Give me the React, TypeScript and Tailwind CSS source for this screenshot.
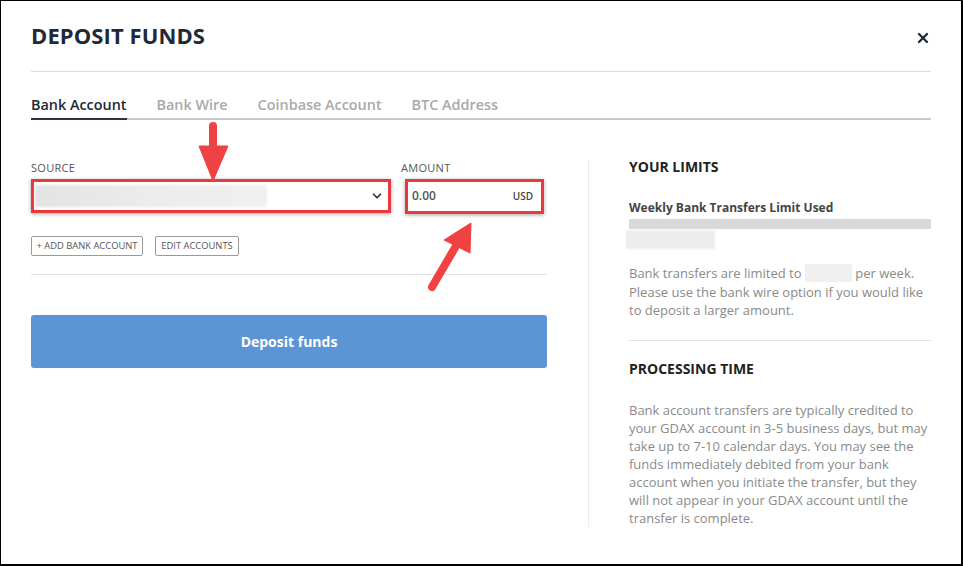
import { X, ChevronDown } from "lucide-react";

function App() {
  const tabs = ["Bank Account", "Bank Wire", "Coinbase Account", "BTC Address"];

  return (
    <div
      className="relative w-[963px] h-[566px] bg-white border-l border-t border-r-2 border-b-2 border-black overflow-hidden"
      style={{ fontFamily: '"Open Sans", "Liberation Sans", sans-serif' }}
    >
      <div className="pl-[30px] pr-[30px]">
        {/* header */}
        <div className="h-[71px] flex items-center justify-between border-b border-[#dcdcdc]">
          <h1 className="text-[22px] leading-[28px] font-bold text-[#1e2a36] tracking-[0.1px] -mt-[2px]">
            DEPOSIT FUNDS
          </h1>
          <X size={16} strokeWidth={3.5} className="text-[#1e2a36] mt-[4px]" />
        </div>

        {/* tabs */}
        <div className="flex gap-[30px] pt-[23px] border-b-2 border-[#c9c9c9]">
          {tabs.map((t, i) => (
            <div
              key={t}
              className={
                i === 0
                  ? "text-[14.4px] leading-[20px] font-semibold text-[#1e2a36] pb-[3px] border-b-2 border-[#2b3440] -mb-[2px]"
                  : "text-[14.4px] leading-[20px] font-semibold text-[#a9a9a9] pb-[3px]"
              }
            >
              {t}
            </div>
          ))}
        </div>

        {/* body */}
        <div className="flex pt-[40px]">
          <div className="w-[516px]">
            <div className="flex gap-[10px]">
              <div className="w-[360px]">
                <div className="text-[11px] leading-[16px] text-[#555] tracking-[0.3px]">SOURCE</div>
                <div className="mt-[3px] h-[34px] border-[3px] border-[#e8393f] shadow-[0_1px_4px_rgba(0,0,0,0.35)] flex items-center justify-between pl-[1px] pr-[4px]">
                  <div className="w-[232px] h-[22px] bg-gradient-to-r from-[#e3e3e3] via-[#ececec] to-[#f0f0f0] blur-[1px]" />
                  <ChevronDown size={14} strokeWidth={3} className="text-[#333]" />
                </div>
              </div>
              <div className="w-[146px]">
                <div className="text-[11px] leading-[16px] text-[#555] tracking-[0.3px]">AMOUNT</div>
                <div className="mt-[3px] ml-[4px] w-[139px] h-[35px] border-[3px] border-[#e8393f] shadow-[0_1px_4px_rgba(0,0,0,0.35)] flex items-center justify-between pl-[4px] pr-[8px]">
                  <span className="text-[12px] font-semibold text-[#555] -mt-[2px]">0.00</span>
                  <span className="text-[10px] font-semibold text-[#444]">USD</span>
                </div>
              </div>
            </div>

            <div className="flex gap-[12px] mt-[22px]">
              <button className="h-[20px] w-[112px] border border-[#9a9a9a] rounded-[2px] text-[9.4px] text-[#555] flex items-center justify-center">
                + ADD BANK ACCOUNT
              </button>
              <button className="h-[20px] w-[84px] border border-[#9a9a9a] rounded-[2px] text-[9.4px] text-[#555] flex items-center justify-center">
                EDIT ACCOUNTS
              </button>
            </div>

            <div className="mt-[18px] h-px bg-[#e2e2e2]" />

            <button className="mt-[40px] w-full h-[53px] bg-[#5b95d6] rounded-[3px] text-white text-[14px] font-bold">
              Deposit funds
            </button>
          </div>

          <div className="ml-[41px] pl-[40px] border-l border-[#ececec] w-[343px] -mt-[1px]">
            <div className="text-[14px] leading-[16px] font-bold text-[#222]">YOUR LIMITS</div>
            <div className="mt-[25px] text-[12px] leading-[16px] font-bold text-[#444]">
              Weekly Bank Transfers Limit Used
            </div>
            <div className="mt-[3px] h-[10px] bg-[#d9d9d9]" />
            <div className="mt-[1px] -ml-[3px] w-[89px] h-[19px] bg-[#ededed] blur-[1px]" />
            <p className="mt-[15px] text-[13px] leading-[18.5px] text-[#8a8a8a]">
              Bank transfers are limited to{" "}
              <span className="inline-block align-middle w-[47px] h-[18px] bg-[#f0f0f0] -mt-[3px]" /> per week.
              Please use the bank wire option if you would like to deposit a larger amount.
            </p>
            <div className="mt-[20px] h-px bg-[#e4e4e4]" />
            <div className="mt-[20px] text-[14px] leading-[16px] font-bold text-[#222]">PROCESSING TIME</div>
            <p className="mt-[24px] text-[13px] leading-[18px] text-[#8a8a8a]">
              Bank account transfers are typically credited to your GDAX account in 3-5 business days, but may
              take up to 7-10 calendar days. You may see the funds immediately debited from your bank account
              when you initiate the transfer, but they will not appear in your GDAX account until the transfer is
              complete.
            </p>
          </div>
        </div>
      </div>

      {/* annotation arrows */}
      <svg className="absolute left-0 top-0 pointer-events-none" width="963" height="566">
        <g fill="#f04243" stroke="#f04243">
          <line x1="212" y1="125" x2="212" y2="150" strokeWidth="8" strokeLinecap="round" />
          <polygon points="198,145 227,145 212,180" strokeWidth="1" strokeLinejoin="round" />
          <line x1="431" y1="286" x2="455" y2="245" strokeWidth="8" strokeLinecap="round" />
          <polygon points="443,239 469,252 470,222" strokeWidth="1" strokeLinejoin="round" />
        </g>
      </svg>
    </div>
  );
}

export default App;
